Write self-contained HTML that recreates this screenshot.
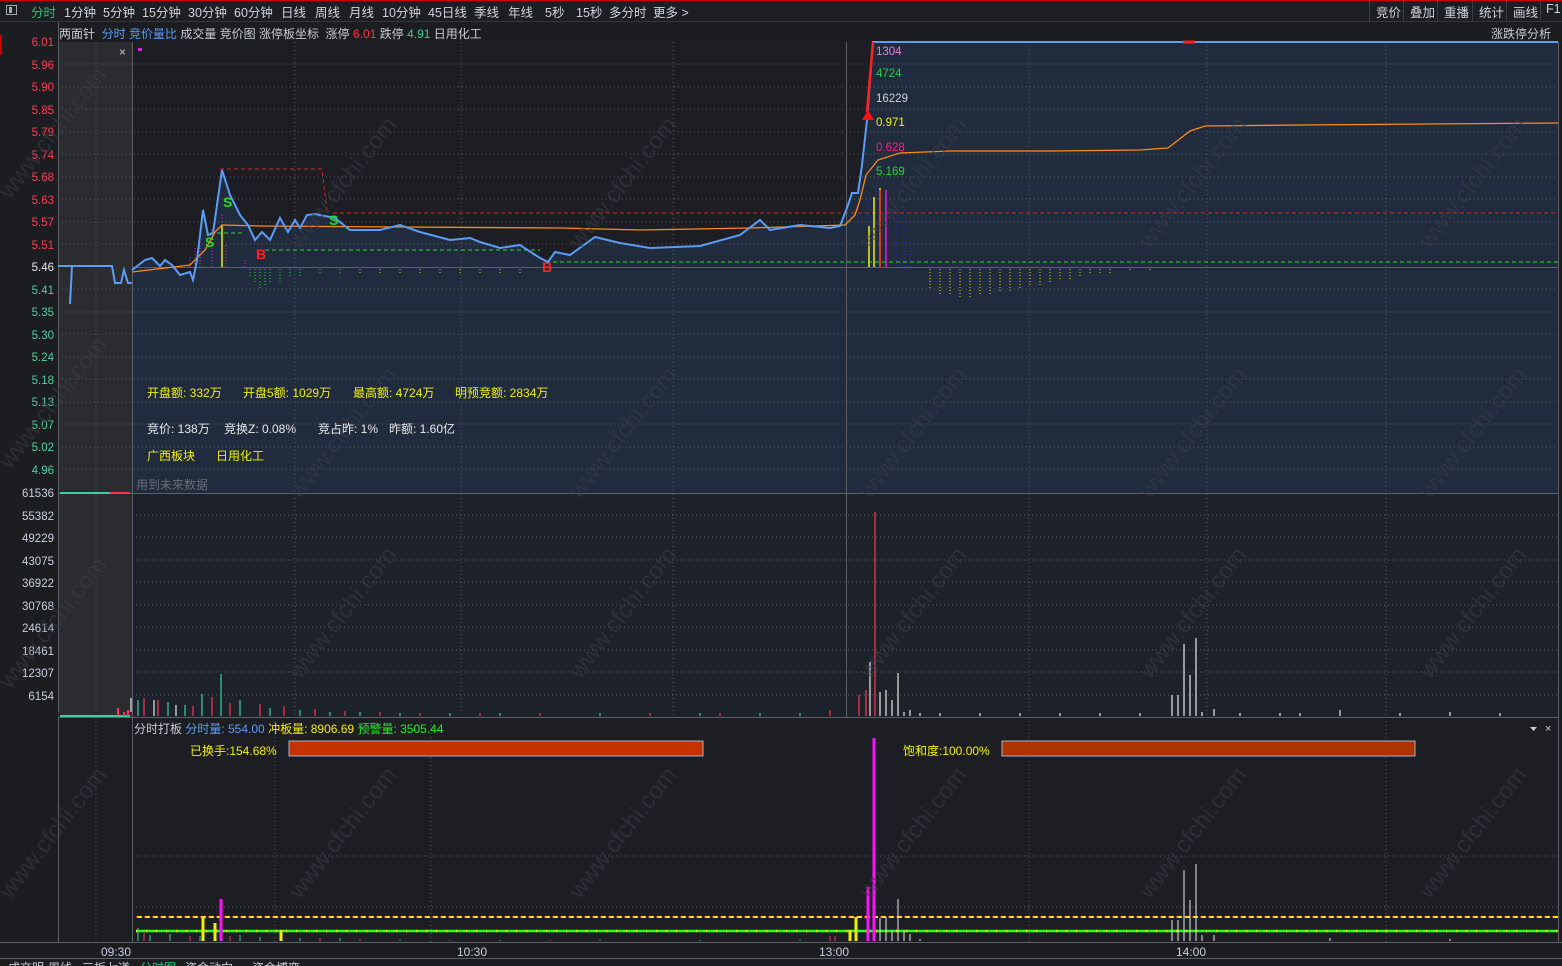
<!DOCTYPE html>
<html><head><meta charset="utf-8"><style>
body{margin:0;width:1562px;height:966px;background:#1b1d21;overflow:hidden;font-family:"Liberation Sans","Noto Sans CJK SC",sans-serif;font-size:12px;color:#c8ccd4;position:relative}
.a{position:absolute;white-space:nowrap}
#top{position:absolute;left:0;top:0;width:1562px;height:22px;background:#1c1e22;border-top:1px solid #c00;box-sizing:border-box;border-bottom:1px solid #33363c}
#top span{position:absolute;top:1px;font-size:12.5px;color:#d0d4dc}
.rb{position:absolute;top:0;height:21px;border-left:1px solid #3a3d44;padding:1px 6px 0;box-sizing:border-box;font-size:12.5px;color:#d0d4dc}
svg text{font-family:"Liberation Sans","Noto Sans CJK SC",sans-serif}
</style></head><body>
<div id="top">
<div style="position:absolute;left:6px;top:4px;width:11px;height:10px;border:1px solid #aaa;box-sizing:border-box"><div style="position:absolute;left:2px;top:1px;width:3px;height:6px;background:#aaa"></div></div>
<span style="left:31px;color:#1ec97a">分时</span><span style="left:64px">1分钟</span><span style="left:103px">5分钟</span><span style="left:142px">15分钟</span><span style="left:188px">30分钟</span><span style="left:234px">60分钟</span><span style="left:281px">日线</span><span style="left:315px">周线</span><span style="left:349px">月线</span><span style="left:382px">10分钟</span><span style="left:428px">45日线</span><span style="left:474px">季线</span><span style="left:508px">年线</span><span style="left:545px">5秒</span><span style="left:576px">15秒</span><span style="left:609px">多分时</span><span style="left:653px">更多 &gt;</span>
<div class="rb" style="left:1369px">竞价</div><div class="rb" style="left:1403px">叠加</div><div class="rb" style="left:1437px">重播</div><div class="rb" style="left:1472px">统计</div><div class="rb" style="left:1506px">画线</div><div class="rb" style="left:1540px;padding-left:5px">F1</div>
</div>
<div class="a" style="left:59px;top:25px">两面针 <span style="color:#5b9cf5">&nbsp;分时 竞价量比</span> 成交量 竞价图 涨停板坐标 &nbsp;涨停 <span style="color:#ff3344">6.01</span> 跌停 <span style="color:#3ccf8e">4.91</span> 日用化工</div>
<div class="a" style="left:1491px;top:25px">涨跌停分析</div>

<svg width="1562" height="966" style="position:absolute;left:0;top:0">
<rect x="58" y="42" width="1500" height="451" fill="#1c1e23"/>
<rect x="58" y="42" width="74" height="451" fill="#2a2c30"/>
<rect x="132" y="493" width="1426" height="224" fill="#1d212a"/>
<rect x="58" y="493" width="74" height="224" fill="#2a2c30"/>
<rect x="58" y="717" width="1500" height="225" fill="#1c1e23"/>
<path d="M132,270 145,260 152,258 160,266 165,260 172,265 180,275 190,272 193,280 197,260 203,210 208,235 213,233 222,170 230,195 240,215 248,225 255,240 262,232 270,240 280,218 288,232 295,220 300,228 307,215 315,214 325,216 335,218 345,226 350,230 380,230 400,225 420,232 450,240 470,238 480,242 500,248 520,245 540,258 548,262 555,252 570,255 595,237 620,243 650,248 700,246 740,235 760,220 770,230 800,225 830,228 840,226 848,205 852,193 858,193 862,165 867,120 870,80 873,42 1558,42 1558,493 132,493Z" fill="#202b3e"/>
<g stroke="#5a5e66" stroke-dasharray="1,3" stroke-width="1">
<path d="M58,64H1558M58,87H1558M58,109H1558M58,132H1558M58,154H1558M58,177H1558M58,199H1558M58,222H1558M58,244H1558M58,289H1558M58,312H1558M58,334H1558M58,357H1558M58,379H1558M58,402H1558M58,424H1558M58,447H1558M58,469H1558"/>
<path d="M132,515H1558M132,537H1558M132,560H1558M132,582H1558M132,605H1558M132,627H1558M132,650H1558M132,672H1558M132,695H1558"/>
<path d="M132,856H1558M132,907H1558"/>
<path d="M96,42V942M295,42V717M461,42V717M673,42V717M1029,42V717M1207,42V717M1386,42V717M275,717V942M431,717V942M1029,717V942M1386,717V942"/>
</g>
<g stroke="#5c6068" stroke-width="1">
<path d="M58.5,22V942M132.5,42V942M846.5,42V717M58,493.5H1558M58,717.5H1558M1558.5,42V942M0,942.5H1562M0,958.5H1562"/>
<path d="M132,267.5H1558"/>
</g>
<path d="M258,250H540M546,262H1558" stroke="#22dd22" stroke-dasharray="4,3"/>
<path d="M220,169H322L327,212M333,213H1558" stroke="#e02020" stroke-dasharray="4,3" fill="none"/>
<path d="M210,233H245" stroke="#22dd22" stroke-dasharray="4,3"/>
<g stroke-width="1" stroke-dasharray="1,2">
<path d="M190,267V255M195,267V248M200,267V240M212,267V230M222,267V215M226,267V245M245,267V258" stroke="#e020e0"/>
<path d="M250,269V278M255,269V283M260,269V288M265,269V286M270,269V284M280,269V282M290,269V278M300,269V276M320,269V274M340,269V273" stroke="#22dd22"/>
<path d="M360,269V273M380,269V273M400,269V273M420,269V273M440,269V273M460,269V273M480,269V273M500,269V273M520,269V273" stroke="#e8e000"/>
<path d="M930,269V290M940,269V294M950,269V296M960,269V297M970,269V297M980,269V296M990,269V295M1000,269V293M1010,269V291M1020,269V289M1030,269V287M1040,269V285M1050,269V283M1060,269V281M1070,269V279M1080,269V277M1090,269V275M1100,269V274M1110,269V273M1130,269V272M1150,269V272" stroke="#e8e000"/>
<path d="M868,267V200M876,267V185M880,267V195M896,267V217M904,267V225M910,267V240" stroke="#2030e0"/>
</g>
<path d="M869,267V226M874,267V197M880,267V188" stroke="#f0f000" stroke-width="1.5"/>
<path d="M886,267V190" stroke="#e020e0" stroke-width="1.5"/>
<path d="M880,267V190" stroke="#f02020" stroke-width="1.5"/>
<path d="M222,267V226" stroke="#f0f000" stroke-width="1.5"/>
<path d="M132,272 190,265 205,250 215,232 222,225 260,226 400,227 560,228 640,230 750,228 845,225 855,215 860,200 866,175 878,160 900,153 950,151 1050,151 1140,150 1168,148 1190,131 1205,126 1300,125 1558,123" fill="none" stroke="#ff8a14" stroke-width="1.3"/>
<path d="M58,266H72L70,304M72,266H112L115,283H121L124,270L128,283H132M132,270 145,260 152,258 160,266 165,260 172,265 180,275 190,272 193,280 197,260 203,210 208,235 213,233 222,170 230,195 240,215 248,225 255,240 262,232 270,240 280,218 288,232 295,220 300,228 307,215 315,214 325,216 335,218 345,226 350,230 380,230 400,225 420,232 450,240 470,238 480,242 500,248 520,245 540,258 548,262 555,252 570,255 595,237 620,243 650,248 700,246 740,235 760,220 770,230 800,225 830,228 840,226 848,205 852,193 858,193 862,165 867,120 870,80 873,42 1558,42" fill="none" stroke="#5b9cf5" stroke-width="2"/>
<path d="M867,112L873,42" stroke="#ff2020" stroke-width="2.5"/>
<path d="M1183,42H1195" stroke="#ff2020" stroke-width="3"/>
<path d="M862,120L868,110L874,120Z" fill="#ff1010"/>
<rect x="138" y="48" width="4" height="3" fill="#e020e0"/>
<text x="119" y="56" fill="#ccc" font-size="12">×</text>
<g font-size="14" font-weight="bold">
<text x="223" y="207" fill="#22dd22">S</text><text x="205" y="247" fill="#22dd22">S</text><text x="329" y="225" fill="#22dd22">S</text>
<text x="256" y="259" fill="#ff2020">B</text><text x="542" y="272" fill="#ff2020">B</text></g>
<g font-size="11.5">
<text x="876" y="55" fill="#e080e0">1304</text><text x="876" y="77" fill="#22cc44">4724</text><text x="876" y="102" fill="#d0d0d0">16229</text><text x="876" y="126" fill="#f0f000">0.971</text><text x="876" y="151" fill="#ff2080">0.628</text><text x="876" y="175" fill="#22dd22">5.169</text></g>
<g font-size="11.5" text-anchor="end">
<g fill="#ff3b55"><text x="54" y="46">6.01</text><text x="54" y="69">5.96</text><text x="54" y="91">5.90</text><text x="54" y="114">5.85</text><text x="54" y="136">5.79</text><text x="54" y="159">5.74</text><text x="54" y="181">5.68</text><text x="54" y="204">5.63</text><text x="54" y="226">5.57</text><text x="54" y="249">5.51</text></g>
<text x="54" y="271" fill="#e8e8e8">5.46</text>
<g fill="#50d0a0"><text x="54" y="294">5.41</text><text x="54" y="316">5.35</text><text x="54" y="339">5.30</text><text x="54" y="361">5.24</text><text x="54" y="384">5.18</text><text x="54" y="406">5.13</text><text x="54" y="429">5.07</text><text x="54" y="451">5.02</text><text x="54" y="474">4.96</text></g>
<g fill="#c8d0e0"><text x="54" y="497">61536</text><text x="54" y="520">55382</text><text x="54" y="542">49229</text><text x="54" y="565">43075</text><text x="54" y="587">36922</text><text x="54" y="610">30768</text><text x="54" y="632">24614</text><text x="54" y="655">18461</text><text x="54" y="677">12307</text><text x="54" y="700">6154</text></g>
</g>
<rect x="0" y="35" width="2" height="20" fill="#c00"/>
<g stroke-width="1.2">
<path d="M138,716V700M168,716V702M185,716V705M202,716V694M221,716V674M240,716V700M270,716V708M300,716V710M330,716V712M360,716V712M400,716V713M450,716V713M500,716V713M600,716V713M700,716V713M760,716V713M800,716V713" stroke="#3cd0a0"/>
<path d="M144,716V698M158,716V700M193,716V706M212,716V697M230,716V703M260,716V704M284,716V706M315,716V709M345,716V711M380,716V712M420,716V713M480,716V713M540,716V713M650,716V713M720,716V713M830,716V710" stroke="#ff3355"/>
<path d="M875,716V512M866,716V690M859,716V695" stroke="#ff3355"/>
<path d="M131,716V698M154,716V700M176,716V705M870,716V662M880,716V692M886,716V690M892,716V700M898,716V673M904,716V712M910,716V710M920,716V713M940,716V713M980,716V713M1020,716V713M1060,716V713M1100,716V713M1140,716V713M1172,716V695M1178,716V695M1184,716V644M1190,716V675M1196,716V638M1202,716V712M1214,716V709M1240,716V713M1280,716V713M1300,716V713M1340,716V710M1400,716V713M1450,716V712M1500,716V713" stroke="#e8e8e8"/>
</g>
<rect x="58" y="712" width="74" height="5" fill="#2a2c30"/>
<path d="M60,716H130" stroke="#3cd0a0" stroke-width="2"/><path d="M118,716V708M124,716V712M128,716V710" stroke="#ff3355" stroke-width="2"/>
<path d="M60,493H130" stroke="#3cd0a0" stroke-width="2"/><path d="M110,493H130" stroke="#ff3355" stroke-width="2"/>
<rect x="289" y="741" width="414" height="15" fill="#c43200" stroke="#a8b4c8"/>
<rect x="1002" y="741" width="413" height="15" fill="#ad3300" stroke="#a8b4c8"/>
<path d="M136,917H1558" stroke="#f0f000" stroke-width="2" stroke-dasharray="6,2"/>
<path d="M136,917H1558" stroke="#e02020" stroke-width="2" stroke-dasharray="1,7"/>
<path d="M136,931H1558" stroke="#22ff22" stroke-width="2.5"/>
<path d="M136,931H1558" stroke="#f0f000" stroke-width="2.5" stroke-dasharray="1,9"/>
<g stroke-width="1">
<path d="M138,941V928M150,941V935M170,941V934M200,941V936M240,941V935M260,941V937M300,941V938M340,941V938M400,941V940M500,941V940M600,941V940M700,941V940M800,941V940" stroke="#3cd0a0"/>
<path d="M144,941V933M190,941V936M230,941V936M280,941V937M320,941V938M360,941V939M450,941V940M550,941V940M830,941V936M835,941V936" stroke="#ff3355"/>
<path d="M880,941V918M886,941V917M892,941V930M898,941V899M904,941V930M910,941V934M920,941V939M1172,941V920M1178,941V920M1184,941V870M1190,941V900M1196,941V864M1202,941V935M1214,941V935M1330,941V938M1450,941V939" stroke="#e8e8e8"/>
</g>
<path d="M203,941V918M215,941V923M281,941V930M850,941V930M856,941V917" stroke="#f0f000" stroke-width="3"/>
<path d="M221,941V899M868,941V887M874,941V738" stroke="#ff10ff" stroke-width="3"/>
<path d="M1530,727L1537,727L1533.5,731Z" fill="#ccc"/>
<text x="1545" y="732" fill="#ccc" font-size="11">×</text>
<g font-size="12" fill="#c8d0e0"><text x="101" y="956">09:30</text><text x="457" y="956">10:30</text><text x="819" y="956">13:00</text><text x="1176" y="956">14:00</text></g>
<g fill="#3a3e48" font-size="24" opacity="0.55">
<text transform="translate(10,200) rotate(-52)">www.cfchi.com</text>
<text transform="translate(300,250) rotate(-52)">www.cfchi.com</text>
<text transform="translate(580,250) rotate(-52)">www.cfchi.com</text>
<text transform="translate(870,250) rotate(-52)">www.cfchi.com</text>
<text transform="translate(1150,250) rotate(-52)">www.cfchi.com</text>
<text transform="translate(1430,250) rotate(-52)">www.cfchi.com</text>
<text transform="translate(10,470) rotate(-52)">www.cfchi.com</text>
<text transform="translate(300,500) rotate(-52)">www.cfchi.com</text>
<text transform="translate(580,500) rotate(-52)">www.cfchi.com</text>
<text transform="translate(870,500) rotate(-52)">www.cfchi.com</text>
<text transform="translate(1150,500) rotate(-52)">www.cfchi.com</text>
<text transform="translate(1430,500) rotate(-52)">www.cfchi.com</text>
<text transform="translate(10,690) rotate(-52)">www.cfchi.com</text>
<text transform="translate(300,680) rotate(-52)">www.cfchi.com</text>
<text transform="translate(580,680) rotate(-52)">www.cfchi.com</text>
<text transform="translate(870,680) rotate(-52)">www.cfchi.com</text>
<text transform="translate(1150,680) rotate(-52)">www.cfchi.com</text>
<text transform="translate(1430,680) rotate(-52)">www.cfchi.com</text>
<text transform="translate(10,900) rotate(-52)">www.cfchi.com</text>
<text transform="translate(300,900) rotate(-52)">www.cfchi.com</text>
<text transform="translate(580,900) rotate(-52)">www.cfchi.com</text>
<text transform="translate(870,900) rotate(-52)">www.cfchi.com</text>
<text transform="translate(1150,900) rotate(-52)">www.cfchi.com</text>
<text transform="translate(1430,900) rotate(-52)">www.cfchi.com</text>
</g>
</svg>
<div class="a" style="left:147px;top:384px;color:#f0f000">开盘额: 332万</div>
<div class="a" style="left:243px;top:384px;color:#f0f000">开盘5额: 1029万</div>
<div class="a" style="left:353px;top:384px;color:#f0f000">最高额: 4724万</div>
<div class="a" style="left:455px;top:384px;color:#f0f000">明预竞额: 2834万</div>
<div class="a" style="left:147px;top:420px;color:#e8e8e8">竞价: 138万</div>
<div class="a" style="left:224px;top:420px;color:#e8e8e8">竞换Z: 0.08%</div>
<div class="a" style="left:318px;top:420px;color:#e8e8e8">竞占昨: 1%</div>
<div class="a" style="left:389px;top:420px;color:#e8e8e8">昨额: 1.60亿</div>
<div class="a" style="left:147px;top:447px;color:#f0f000">广西板块</div>
<div class="a" style="left:216px;top:447px;color:#f0f000">日用化工</div>
<div class="a" style="left:136px;top:476px;color:#6a6e76">用到未来数据</div>
<div class="a" style="left:134px;top:720px;color:#c8ccd4">分时打板 <span style="color:#5b9cf5">分时量: 554.00</span> <span style="color:#f0f000">冲板量: 8906.69</span> <span style="color:#22ee22">预警量: 3505.44</span></div>
<div class="a" style="left:190px;top:742px;color:#f0f000">已换手:154.68%</div>
<div class="a" style="left:903px;top:742px;color:#f0f000">饱和度:100.00%</div>
<div class="a" style="left:0;top:961px;height:5px;overflow:hidden;width:320px;font-size:12px;line-height:14px"><span style="position:absolute;left:8px;top:0">成交明</span><span style="position:absolute;left:48px">周线</span><span style="position:absolute;left:82px">三板七道</span><span style="position:absolute;left:140px;color:#1ec97a">分时图</span><span style="position:absolute;left:185px">资金动向</span><span style="position:absolute;left:252px">资金博弈</span></div>
</body></html>
